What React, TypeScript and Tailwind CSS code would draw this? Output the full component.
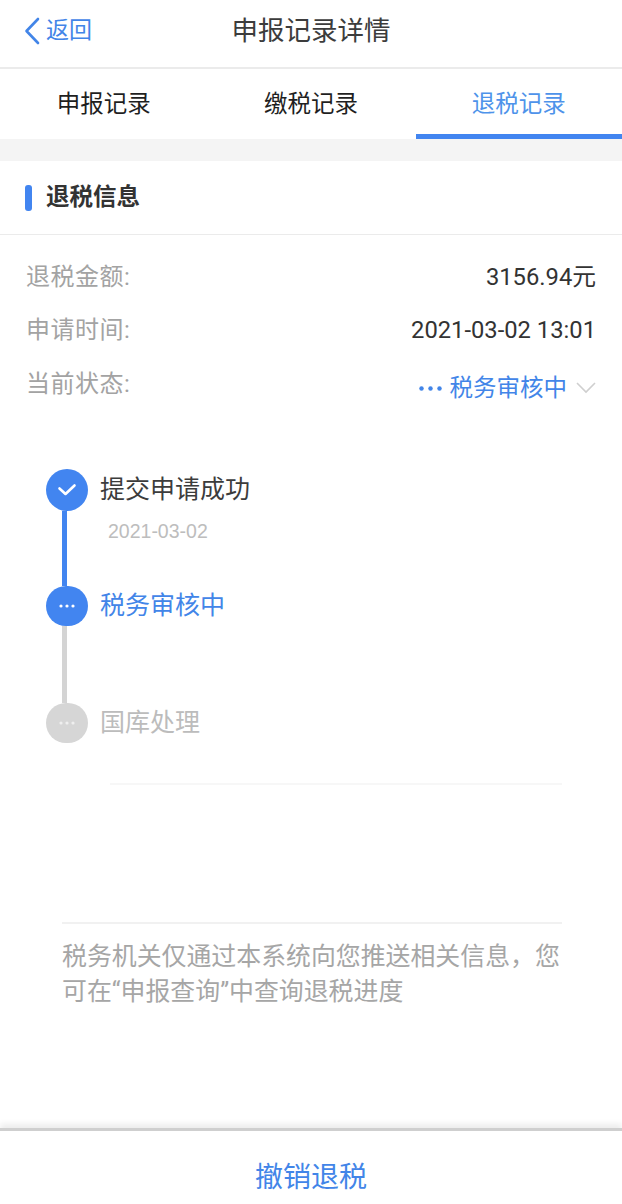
import React from 'react';

const BLUE = 'text-[#4285e8]';

function Dots({ className, r = 1.6 }: { className: string; r?: number }) {
  return (
    <svg width="18" height="6" viewBox="0 0 18 6" className={className}>
      <circle cx="3" cy="3" r={r} fill="currentColor" />
      <circle cx="9" cy="3" r={r} fill="currentColor" />
      <circle cx="15" cy="3" r={r} fill="currentColor" />
    </svg>
  );
}

function InfoRow({ label, children, height }: { label: string; children: React.ReactNode; height: string }) {
  return (
    <div className={`flex justify-between items-start ${height}`}>
      <span className="text-[#a3a3a3] text-[24px] tracking-[0.5px] leading-[34px]">{label}</span>
      {children}
    </div>
  );
}

export default function App() {
  return (
    <div className="h-[1204px] overflow-hidden bg-white flex flex-col font-['Roboto','Noto_Sans_CJK_SC',sans-serif]">
      {/* Header */}
      <header className="h-[69px] shrink-0 border-b-2 border-[#ebebeb] relative flex items-center justify-center">
        <div className={`absolute left-[24px] top-[15px] flex items-center ${BLUE}`}>
          <svg width="16" height="28" viewBox="0 0 16 28" fill="none" stroke="currentColor" strokeWidth="2.6" strokeLinecap="round" strokeLinejoin="round">
            <path d="M14 2 L2.5 14 L14 26" />
          </svg>
          <span className="ml-[6px] mt-[1px] text-[23px] leading-[30px]">返回</span>
        </div>
        <h1 className="text-[26.5px] leading-[36px] text-[#3c3c3c] -mt-[6px]">申报记录详情</h1>
      </header>

      {/* Tabs */}
      <nav className="h-[70px] shrink-0 grid grid-cols-3 text-[23.5px]">
        <div className="flex items-center justify-center text-[#1f1f1f] pt-[2px]">申报记录</div>
        <div className="flex items-center justify-center text-[#1f1f1f] pt-[2px]">缴税记录</div>
        <div className="flex items-center justify-center text-[#4e93ea] border-b-[5px] border-[#4285f0] ml-[1px] pt-[7px]">退税记录</div>
      </nav>
      <div className="h-[22px] shrink-0 bg-[#f4f4f4]" />

      {/* Section title */}
      <div className="h-[74px] shrink-0 border-b border-[#ebebeb] flex items-center pl-[25px] pb-[1px]">
        <span className="w-[7px] h-[26px] rounded-[3px] bg-[#4285f0] mt-[1px]" />
        <h2 className="ml-[14px] text-[23.5px] font-bold text-[#333333] leading-[32px]">退税信息</h2>
      </div>

      {/* Info rows */}
      <div className="px-[26px] pt-[25px]">
        <InfoRow label="退税金额:" height="h-[53px]">
          <span className="text-[#333333] text-[23.75px] leading-[34px]">3156.94元</span>
        </InfoRow>
        <InfoRow label="申请时间:" height="h-[54px]">
          <span className="text-[#333333] text-[23.75px] leading-[34px]">2021-03-02 13:01</span>
        </InfoRow>
        <InfoRow label="当前状态:" height="h-[53px]">
          <div className={`flex items-center mt-[4px] ${BLUE}`}>
            <Dots className="mr-[6px] w-[27px] h-[9px]" r={1.5} />
            <span className="text-[23.5px] leading-[34px]">税务审核中</span>
            <svg width="20" height="12" viewBox="0 0 20 12" fill="none" stroke="#cfcfcf" strokeWidth="1.6" className="ml-[9px]">
              <path d="M1 1 L10 10 L19 1" />
            </svg>
          </div>
        </InfoRow>
      </div>

      {/* Timeline */}
      <div className="pl-[46px] pt-[49px] flex flex-col">
        <div className="flex h-[117px]">
          <div className="w-[42px] flex flex-col">
            <div className="w-[42px] h-[42px] rounded-full bg-[#4285f0] flex items-center justify-center shrink-0">
              <svg width="20" height="14" viewBox="0 0 20 14" fill="none" stroke="white" strokeWidth="2.6" strokeLinecap="round" strokeLinejoin="round">
                <path d="M2.5 5.5 L8.5 11 L17.5 2.5" />
              </svg>
            </div>
            <div className="w-[5px] ml-[16px] flex-1 bg-[#4285f0]" />
          </div>
          <div className="ml-[12px]">
            <p className="text-[25px] leading-[40px] mt-[1px] text-[#3c3c3c]">提交申请成功</p>
            <p className="ml-[8px] mt-[8px] text-[19.5px] leading-[26px] text-[#bdbdbd] font-['Liberation_Sans',sans-serif]">2021-03-02</p>
          </div>
        </div>
        <div className="flex h-[117px]">
          <div className="w-[42px] flex flex-col">
            <div className="w-[42px] h-[40px] rounded-full bg-[#4285f0] flex items-center justify-center shrink-0">
              <Dots className="text-white" />
            </div>
            <div className="w-[5px] ml-[16px] flex-1 bg-[#d4d4d4]" />
          </div>
          <p className={`ml-[12px] text-[25px] leading-[40px] ${BLUE}`}>税务审核中</p>
        </div>
        <div className="flex">
          <div className="w-[42px] h-[40px] rounded-full bg-[#d6d6d6] flex items-center justify-center shrink-0">
            <Dots className="text-[#efefef]" />
          </div>
          <p className="ml-[12px] text-[25px] leading-[40px] text-[#bcbcbc]">国库处理</p>
        </div>
      </div>

      <div className="h-[2px] ml-[110px] mr-[60px] mt-[40px] bg-[#f7f7f7] shrink-0" />
      <div className="h-[2px] ml-[62px] mr-[60px] mt-[137px] bg-[#f1f1f1] shrink-0" />

      {/* Note */}
      <p className="ml-[62px] mr-[60px] mt-[15px] text-[24.9px] leading-[35px] text-[#a6a6a6]">
        税务机关仅通过本系统向您推送相关信息，您可在“申报查询”中查询退税进度
      </p>

      {/* Bottom action */}
      <div className="mt-auto h-[76px] shrink-0 border-t-[3px] border-[#cfcfcf] shadow-[0_-4px_6px_rgba(0,0,0,0.08)] flex items-center justify-center">
        <button className={`text-[28px] leading-[38px] ${BLUE} mt-[20px]`}>撤销退税</button>
      </div>
    </div>
  );
}
